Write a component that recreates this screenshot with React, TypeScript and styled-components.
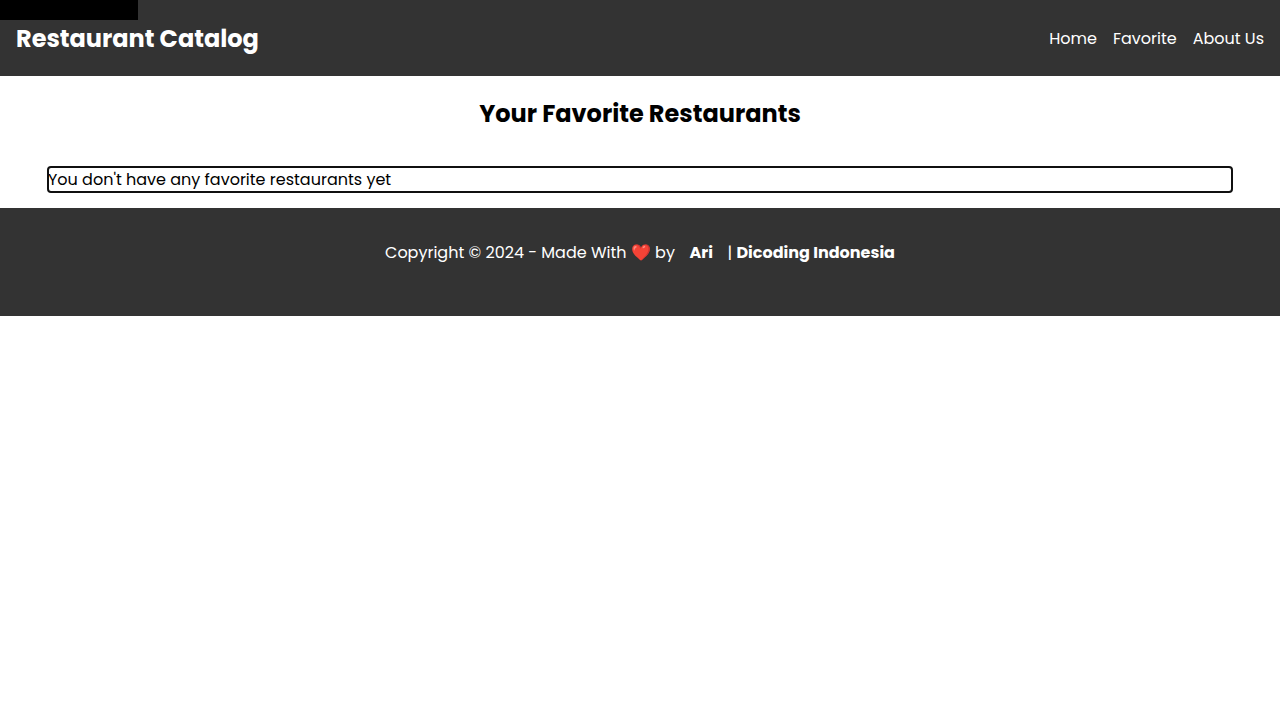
import React from 'react';
import styled, { createGlobalStyle } from 'styled-components';

const GlobalStyle = createGlobalStyle`
  * { box-sizing: border-box; }
  body {
    margin: 0;
    background: #fff;
    color: #000;
    font-family: Poppins, Inter, 'Noto Sans', sans-serif;
    font-size: 16px;
    line-height: 25px;
  }
`;

const SkipLink = styled.a`
  position: absolute;
  top: 0;
  left: 0;
  min-width: 138px;
  min-height: 20px;
  background: #000;
  color: #fff;
  text-align: center;
  text-decoration: none;
  &:focus::after { content: 'Skip to Content'; }
`;

const Header = styled.header`
  display: flex;
  align-items: center;
  justify-content: space-between;
  padding: 16px;
  background: #333;
  color: #fff;
`;

const Brand = styled.h1`
  margin: 0;
  font-size: 24px;
  line-height: 37px;
  font-weight: 700;
`;

const NavList = styled.ul`
  display: flex;
  gap: 16px;
  margin: 0;
  padding: 0;
  list-style: none;
`;

const NavLink = styled.a`
  display: flex;
  align-items: center;
  justify-content: center;
  min-width: 44px;
  min-height: 44px;
  color: #fff;
  text-decoration: none;
`;

const Main = styled.main`
  padding: 20px 16px 16px;
`;

const Title = styled.h2`
  margin: 0 0 35px;
  font-size: 24px;
  line-height: 36px;
  font-weight: 700;
  text-align: center;
`;

const EmptyMessage = styled.p`
  margin: 0 32px;
  border-radius: 3px;
  outline: 2px solid #101010;
  outline-offset: -1px;
`;

const Footer = styled.footer`
  padding: 32px 16px;
  background: #333;
  color: #fff;
  text-align: center;
`;

const FooterText = styled.p`
  margin: 0;
`;

const AuthorLink = styled.a`
  display: inline-block;
  min-width: 44px;
  min-height: 44px;
  color: #fff;
  font-weight: 700;
  text-decoration: none;
  vertical-align: top;
`;

const links = ['Home', 'Favorite', 'About Us'];

export default function App() {
  return (
    <>
      <GlobalStyle />
      <SkipLink href="#content" aria-label="Skip to Content" />
      <Header>
        <Brand>Restaurant Catalog</Brand>
        <nav>
          <NavList>
            {links.map((label) => (
              <li key={label}>
                <NavLink href="#">{label}</NavLink>
              </li>
            ))}
          </NavList>
        </nav>
      </Header>
      <Main id="content">
        <Title>Your Favorite Restaurants</Title>
        <EmptyMessage>You don't have any favorite restaurants yet</EmptyMessage>
      </Main>
      <Footer>
        <FooterText>
          Copyright © 2024 - Made With ❤️ by <AuthorLink href="#">Ari</AuthorLink> |{' '}
          <AuthorLink href="#">Dicoding Indonesia</AuthorLink>
        </FooterText>
      </Footer>
    </>
  );
}
